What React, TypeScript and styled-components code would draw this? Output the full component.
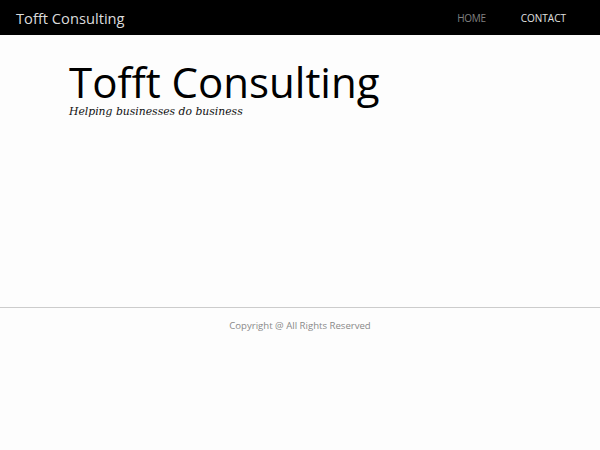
import React from "react";
import styled, { createGlobalStyle } from "styled-components";

const Global = createGlobalStyle`
  html, body { margin: 0; padding: 0; }
  body {
    background: #fdfdfd;
    font-family: "Open Sans", "Liberation Sans", sans-serif;
  }
`;

const NavBar = styled.nav`
  height: 35px;
  background: #000;
  display: flex;
  align-items: center;
  justify-content: space-between;
  padding: 0 16px;
`;

const Brand = styled.div`
  color: #dcdcdc;
  font-size: 14.7px;
`;

const Links = styled.ul`
  display: flex;
  list-style: none;
  margin: 0 18px 0 0;
  padding: 0;
  gap: 35px;
`;

const NavLink = styled.li<{ $active?: boolean }>`
  font-size: 10px;
  color: ${(p) => (p.$active ? "#808080" : "#e0e0e0")};
  letter-spacing: ${(p) => (p.$active ? "-0.3px" : "0")};
`;

const Hero = styled.header`
  height: 273px;
  padding: 26px 0 0 69px;
  box-sizing: border-box;
  border-bottom: 1px solid #ccc;
`;

const Title = styled.h1`
  margin: 0;
  font-weight: 400;
  font-size: 42px;
  line-height: 42px;
  color: #000;
`;

const Tagline = styled.p`
  margin: 3px 0 0;
  font-family: "DejaVu Serif", serif;
  font-style: italic;
  font-size: 10.8px;
  line-height: 11px;
  color: #111;
`;

const Footer = styled.footer`
  text-align: center;
  padding-top: 11px;
  font-size: 9.6px;
  color: #8a8a8a;
`;

export default function App() {
  return (
    <>
      <Global />
      <NavBar>
        <Brand>Tofft Consulting</Brand>
        <Links>
          <NavLink $active>HOME</NavLink>
          <NavLink>CONTACT</NavLink>
        </Links>
      </NavBar>
      <Hero>
        <Title>Tofft Consulting</Title>
        <Tagline>Helping businesses do business</Tagline>
      </Hero>
      <Footer>Copyright @ All Rights Reserved</Footer>
    </>
  );
}
